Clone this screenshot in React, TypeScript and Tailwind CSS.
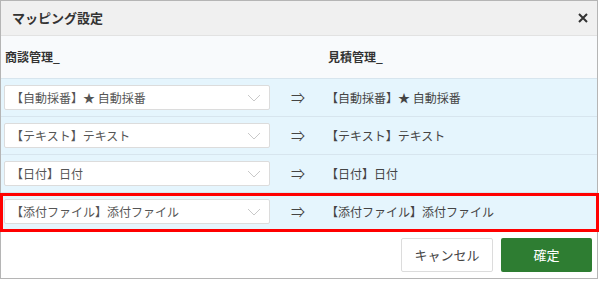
const rows = [
  { left: '【自動採番】★ 自動採番', right: '【自動採番】★ 自動採番' },
  { left: '【テキスト】テキスト', right: '【テキスト】テキスト' },
  { left: '【日付】日付', right: '【日付】日付' },
  { left: '【添付ファイル】添付ファイル', right: '【添付ファイル】添付ファイル', marked: true },
];

function Chevron() {
  return (
    <svg width="14" height="8" viewBox="0 0 14 8" className="shrink-0">
      <path d="M1 1 L7 7 L13 1" fill="none" stroke="#c9c9c9" strokeWidth="1" />
    </svg>
  );
}

export default function App() {
  return (
    <div
      className="h-[281px] w-[600px] bg-white"
      style={{ fontFamily: '"Noto Sans CJK JP", "Noto Sans", sans-serif' }}
    >
      <div className="flex h-[279px] w-[598px] flex-col border border-[#b5b5b5] bg-white">
        {/* title bar */}
        <div className="flex h-[35px] shrink-0 items-center justify-between border-b border-[#e2e2e2] bg-[#f0f0f0] pl-[11px] pr-[9px]">
          <span className="text-[13px] font-semibold text-[#333]">マッピング設定</span>
          <svg width="10" height="10" viewBox="0 0 10 10">
            <path d="M1 1 L9 9 M9 1 L1 9" stroke="#333" strokeWidth="2" />
          </svg>
        </div>

        {/* column headings */}
        <div className="flex h-[42px] shrink-0 items-center bg-[#f8fafc] text-[12px] font-bold text-[#333]">
          <span className="w-[327px] pl-[4px]">商談管理_</span>
          <span>見積管理_</span>
        </div>

        {/* mapping rows */}
        <div className="flex flex-col">
          {rows.map((r, i) => (
            <div
              key={i}
              className="relative flex h-[38px] items-center border-t border-[#d7e5ee] bg-[#e5f5fd] text-[12px] text-[#444]"
            >
              <div className="ml-[3px] flex h-[25px] w-[266px] items-center justify-between rounded-[2px] border border-[#dcdcdc] bg-white pl-[6px] pr-[8px] text-[#555]">
                <span>{r.left}</span>
                <Chevron />
              </div>
              <span className="w-[56px] text-center text-[14px] text-[#444]">⇒</span>
              <span>{r.right}</span>
              {r.marked && (
                <div className="pointer-events-none absolute -bottom-[2px] -left-[1px] -right-[2px] top-0 border-[3px] border-[#ff0000]" />
              )}
            </div>
          ))}
        </div>

        {/* footer */}
        <div className="flex flex-1 items-center justify-end gap-[8px] pr-[5px] pt-[1px]">
          <button className="h-[34px] w-[92px] rounded-[2px] border border-[#dcdcdc] bg-white text-[13px] text-[#444]">
            キャンセル
          </button>
          <button className="h-[34px] w-[91px] rounded-[2px] bg-[#2e7d32] text-[13px] text-white">
            確定
          </button>
        </div>
      </div>
    </div>
  );
}
